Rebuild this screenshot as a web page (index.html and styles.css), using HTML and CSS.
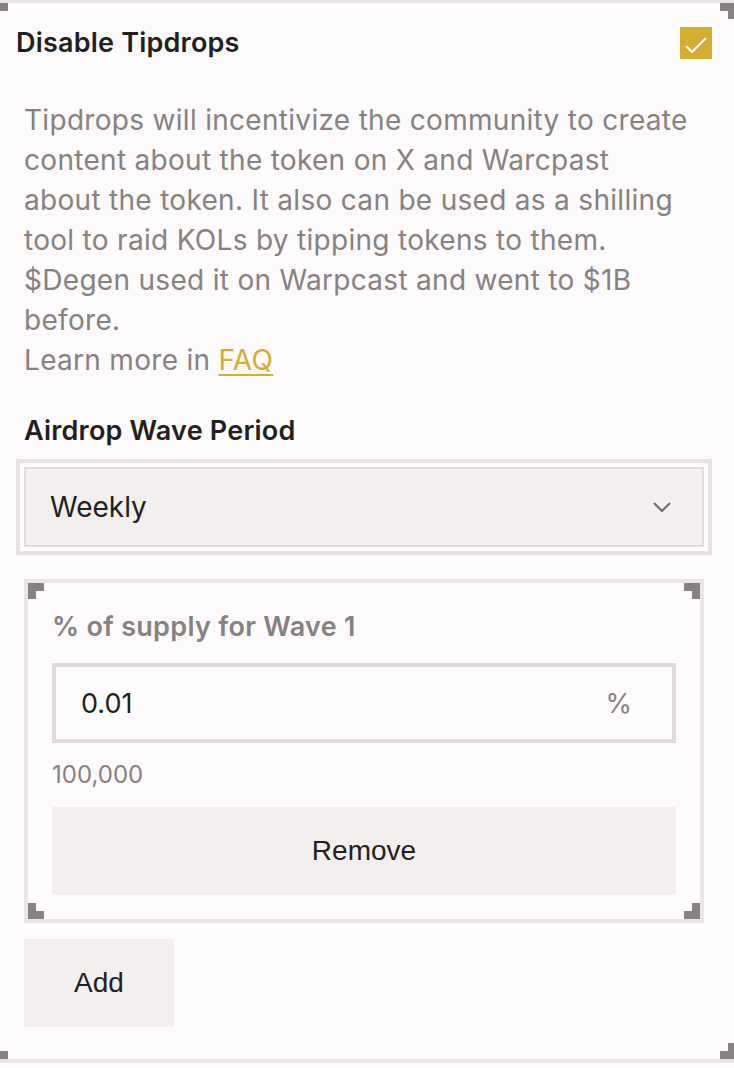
FILE: index.html
```html
<!DOCTYPE html>
<html lang="en">
<head>
<meta charset="utf-8">
<title>Disable Tipdrops</title>
<link rel="stylesheet" href="styles.css">
</head>
<body>
<div class="panel">
  <span class="corner tl"></span>
  <span class="corner tr"></span>
  <span class="corner bl"></span>
  <span class="corner br"></span>

  <div class="head">
    <span class="title">Disable Tipdrops</span>
    <span class="check">
      <svg width="32" height="32" viewBox="0 0 32 32"><polyline points="6,19 12,25 26,11" fill="none" stroke="#ffffff" stroke-width="2"/></svg>
    </span>
  </div>

  <p class="desc">Tipdrops will incentivize the community to create<br>content about the token on X and Warcpast<br>about the token. It also can be used as a shilling<br>tool to raid KOLs by tipping tokens to them.<br>$Degen used it on Warpcast and went to $1B<br>before.<br>Learn more in <a class="link" href="#">FAQ</a></p>

  <div class="field-label">Airdrop Wave Period</div>
  <div class="select">
    <span>Weekly</span>
    <svg class="chev" width="18" height="10" viewBox="0 0 18 10"><polyline points="1,1 9,9 17,1" fill="none" stroke="#6f6a6a" stroke-width="2"/></svg>
  </div>

  <div class="wave-card">
    <span class="corner tl"></span>
    <span class="corner tr"></span>
    <span class="corner bl"></span>
    <span class="corner br"></span>
    <div class="wave-label">% of supply for Wave 1</div>
    <div class="input">
      <span class="value">0.01</span>
      <span class="unit">%</span>
    </div>
    <div class="amount">100,000</div>
    <button class="btn remove">Remove</button>
  </div>

  <button class="btn add">Add</button>
</div>
</body>
</html>
```

FILE: styles.css
```css
html, body {
  margin: 0;
  padding: 0;
  overflow: hidden;
  background: #fcfafa;
}

body {
  font-family: "Inter", "Liberation Sans", sans-serif;
  color: #231f1f;
}

.panel {
  position: relative;
  box-sizing: border-box;
  width: 752px;
  margin: -1px 0 0 -12px;
  border: 4px solid #ebe6e5;
  padding: 32px;
  background: #fcfafa;
}

.corner {
  position: absolute;
  width: 8px;
  height: 8px;
  border: 0 solid #878181;
}
.corner.tl { top: 0; left: 0; border-top-width: 8px; border-left-width: 8px; }
.corner.tr { top: 0; right: 0; border-top-width: 8px; border-right-width: 8px; }
.corner.bl { bottom: 0; left: 0; border-bottom-width: 8px; border-left-width: 8px; }
.corner.br { bottom: 0; right: 0; border-bottom-width: 8px; border-right-width: 8px; }

.head {
  display: flex;
  align-items: center;
  justify-content: space-between;
  height: 32px;
  margin: -8px -8px 0;
}

.title {
  font-size: 27px;
  font-weight: 600;
  letter-spacing: 0.2px;
  line-height: 30px;
}

.check {
  display: flex;
  width: 32px;
  height: 32px;
  background: #d4ad32;
}

.desc {
  margin: 41px 0 0;
  font-size: 28px;
  letter-spacing: 0.3px;
  line-height: 40px;
  color: #878181;
  white-space: nowrap;
}

.link {
  color: #d4ad32;
  text-decoration: underline;
  text-underline-offset: 4px;
}

.field-label {
  margin-top: 35px;
  font-size: 27px;
  font-weight: 600;
  letter-spacing: 0.2px;
  line-height: 32px;
}

.select {
  box-sizing: border-box;
  display: flex;
  align-items: center;
  justify-content: space-between;
  height: 80px;
  margin-top: 20px;
  padding: 0 31px 0 24px;
  border: 2px solid #e0dbdb;
  outline: 4px solid #e7e1e0;
  outline-offset: 4px;
  background: #f2efee;
  font-size: 28px;
}

.wave-card {
  position: relative;
  margin-top: 32px;
  border: 4px solid #ebe6e5;
  padding: 24px;
}

.wave-label {
  font-size: 27px;
  font-weight: 600;
  letter-spacing: 0.3px;
  line-height: 40px;
  color: #878181;
}

.input {
  box-sizing: border-box;
  display: flex;
  align-items: center;
  justify-content: space-between;
  height: 80px;
  margin-top: 16px;
  padding: 0 40px 0 25px;
  border: 4px solid #e0dbdb;
  background: #fdfbfb;
  font-size: 27px;
}

.unit {
  color: #878181;
}

.amount {
  margin-top: 16px;
  font-size: 24px;
  line-height: 32px;
  color: #878181;
}

.btn {
  display: block;
  box-sizing: border-box;
  height: 88px;
  border: 0;
  background: #f2efee;
  color: #231f1f;
  font-family: "Liberation Sans", Arial, sans-serif;
  font-size: 28px;
  padding: 0;
}

.remove {
  width: 100%;
  margin-top: 16px;
}

.add {
  width: 150px;
  margin-top: 16px;
}
```
